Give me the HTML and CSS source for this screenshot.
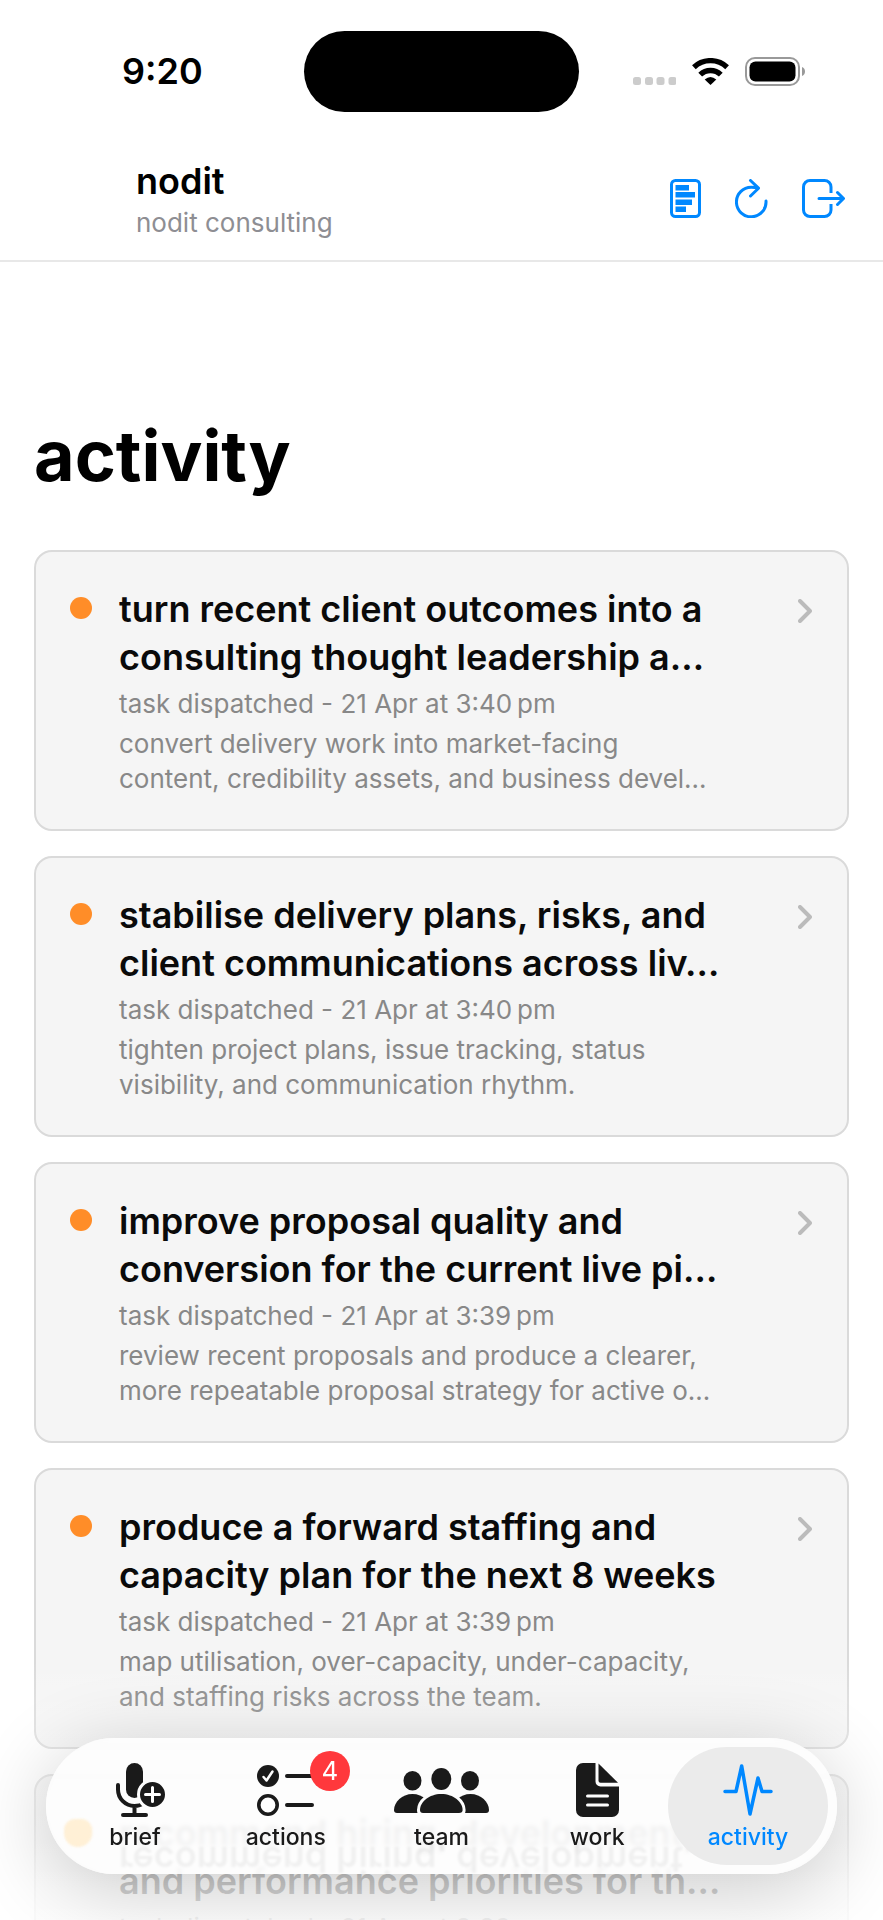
FILE: index.html
```html
<!DOCTYPE html>
<html lang="en">
<head>
  <meta charset="UTF-8">
  <meta name="viewport" content="width=device-width, initial-scale=1">
  <title>nodit - activity</title>
  <link rel="stylesheet" href="styles.css">
</head>
<body>
  <div class="app">

    <div class="status">
      <span class="time">9:20</span>
      <span class="island"></span>
      <div class="status-icons">
        <svg width="43" height="27" viewBox="0 0 43 27" fill="#ccc">
          <rect x="0" y="19" width="8" height="8" rx="2.5"/><rect x="12" y="19" width="8" height="8" rx="2.5"/>
          <rect x="23.5" y="19" width="8" height="8" rx="2.5"/><rect x="35.5" y="19" width="8" height="8" rx="2.5"/>
        </svg>
        <svg width="37" height="27" viewBox="0 0 37 27" fill="none" stroke="#000" stroke-width="5.4">
          <path d="M1.9 9.2A24.3 24.3 0 0 1 35.1 9.2"/>
          <path d="M8.2 16.6A14.8 14.8 0 0 1 28.8 16.6"/>
          <path d="M12.7 21.4Q18.5 16.4 24.3 21.4L18.5 27z" fill="#000" stroke="none"/>
        </svg>
        <svg width="61" height="29" viewBox="0 0 61 29">
          <rect x="1" y="1" width="53" height="27" rx="9" fill="none" stroke="#999" stroke-width="2"/>
          <rect x="4.5" y="4.5" width="46" height="20" rx="6" fill="#000"/>
          <path d="M57 10c4 1.5 4 7.5 0 9z" fill="#999"/>
        </svg>
      </div>
    </div>

    <header class="header">
      <div>
        <div class="brand">nodit</div>
        <div class="company">nodit consulting</div>
      </div>
      <div class="header-actions">
        <button type="button" aria-label="Report">
          <svg width="31" height="39" viewBox="0 0 31 39" fill="none" stroke="currentColor" stroke-width="3">
            <rect x="1.5" y="1.5" width="28" height="36" rx="4"/>
            <path stroke="none" fill="currentColor" d="M5.5 6H19v5.500H5.500zM5.500 13H25v5.500H5.500zM5.500 20.500H22v5.500H5.500zM5.500 27.500H16v5.500H5.500z"/>
          </svg>
        </button>
        <button type="button" aria-label="Refresh">
          <svg width="33" height="39" viewBox="0 0 33 39" fill="none" stroke="currentColor" stroke-width="3" stroke-linecap="round" stroke-linejoin="round">
            <path d="M31 22A14.8 14.8 0 1 1 16.3 8.2Q20 8.2 23.500 9.200M15.500 1.500L23.500 9.200L15.500 17"/>
          </svg>
        </button>
        <button type="button" aria-label="Sign out">
          <svg width="43" height="39" viewBox="0 0 43 39" fill="none" stroke="currentColor" stroke-width="3" stroke-linejoin="round">
            <path d="M29 14V8A6.5 6.5 0 0 0 22.5 1.5H8A6.5 6.5 0 0 0 1.5 8V31A6.5 6.5 0 0 0 8 37.5H22.5A6.5 6.5 0 0 0 29 31V25"/>
            <path stroke-linecap="round" d="M17 19.5H41M35.500 13.500L41.500 19.500L35.500 25.500"/>
          </svg>
        </button>
      </div>
    </header>

    <main class="content">
      <h1>activity</h1>
      <div class="feed">

        <a class="card" href="#">
          <span class="dot"></span>
          <div class="card-body">
            <h2>turn recent client outcomes into a<br>consulting thought leadership a…</h2>
            <p class="meta">task dispatched - 21 Apr at 3:40&#8239;pm</p>
            <p class="desc">convert delivery work into market-facing<br>content, credibility assets, and business devel…</p>
          </div>
          <svg class="chevron" width="14" height="24" viewBox="0 0 14 24"><path d="M2 2L12 12L2 22"/></svg>
        </a>

        <a class="card" href="#">
          <span class="dot"></span>
          <div class="card-body">
            <h2>stabilise delivery plans, risks, and<br>client communications across liv…</h2>
            <p class="meta">task dispatched - 21 Apr at 3:40&#8239;pm</p>
            <p class="desc">tighten project plans, issue tracking, status<br>visibility, and communication rhythm.</p>
          </div>
          <svg class="chevron" width="14" height="24" viewBox="0 0 14 24"><path d="M2 2L12 12L2 22"/></svg>
        </a>

        <a class="card" href="#">
          <span class="dot"></span>
          <div class="card-body">
            <h2>improve proposal quality and<br>conversion for the current live pi…</h2>
            <p class="meta">task dispatched - 21 Apr at 3:39&#8239;pm</p>
            <p class="desc">review recent proposals and produce a clearer,<br>more repeatable proposal strategy for active o…</p>
          </div>
          <svg class="chevron" width="14" height="24" viewBox="0 0 14 24"><path d="M2 2L12 12L2 22"/></svg>
        </a>

        <a class="card" href="#">
          <span class="dot"></span>
          <div class="card-body">
            <h2>produce a forward staffing and<br>capacity plan for the next 8 weeks</h2>
            <p class="meta">task dispatched - 21 Apr at 3:39&#8239;pm</p>
            <p class="desc">map utilisation, over-capacity, under-capacity,<br>and staffing risks across the team.</p>
          </div>
          <svg class="chevron" width="14" height="24" viewBox="0 0 14 24"><path d="M2 2L12 12L2 22"/></svg>
        </a>

        <a class="card" href="#">
          <span class="dot"></span>
          <div class="card-body">
            <h2>recommend hiring, development,<br>and performance priorities for th…</h2>
            <p class="meta">task dispatched - 21 Apr at 3:39&#8239;pm</p>
          </div>
        </a>

      </div>
    </main>

    <div class="fade"></div>

    <nav class="tabbar">
      <div class="glass" aria-hidden="true">
        <span class="glow"></span>
        <span class="reflection">recommend hiring, development,</span>
      </div>
      <a class="tab" href="#">
        <svg width="61" height="54" viewBox="-12 0 61 54" fill="none" stroke="#1a1a1a" stroke-width="4" stroke-linecap="round">
          <rect x="10" y="0" width="17" height="35" rx="8.5" fill="#1a1a1a" stroke="none"/>
          <path d="M2 22V26.5A16.5 16.5 0 0 0 18.5 43Q24 43 28 40M18.5 43V52M7 52H30"/>
          <circle cx="36.5" cy="31.5" r="14" fill="#1a1a1a" stroke="#fdfdfd" stroke-width="3"/>
          <path d="M36.5 24.5V38.5M29.5 31.5H43.5" stroke="#fff" stroke-width="3"/>
        </svg>
        <span>brief</span>
      </a>
      <a class="tab" href="#">
        <svg width="57" height="51" viewBox="0 0 57 51" fill="none" stroke="#1a1a1a" stroke-width="4" stroke-linecap="round">
          <circle cx="11" cy="11" r="11" fill="#1a1a1a" stroke="none"/>
          <path d="M6.5 12L9.5 15.5L15.5 6.5" stroke="#fff" stroke-width="2.5" stroke-linejoin="round"/>
          <circle cx="11" cy="40" r="9.2" stroke-width="3.6"/>
          <path d="M30 11H55M30 40H55"/>
        </svg>
        <span>actions</span>
        <b class="badge">4</b>
      </a>
      <a class="tab wide" href="#">
        <svg width="95" height="45" viewBox="0 0 95 45" fill="#1a1a1a">
          <ellipse cx="18.5" cy="12.7" rx="9" ry="9.8"/>
          <ellipse cx="76" cy="12.7" rx="9" ry="9.8"/>
          <ellipse cx="47.3" cy="11" rx="10" ry="11"/>
          <path d="M0 42C0 34 8 26 18.5 26S37 34 37 42Q37 45 34 45H3Q0 45 0 42z"/>
          <path d="M58 42C58 34 66 26 76.5 26S95 34 95 42Q95 45 92 45H61Q58 45 58 42z"/>
          <path d="M26 42C26 34 35 26 47.3 26S68.6 34 68.6 42Q68.6 45 65 45H29Q26 45 26 42z" stroke="#fdfdfd" stroke-width="6" paint-order="stroke"/>
        </svg>
        <span>team</span>
      </a>
      <a class="tab" href="#">
        <svg width="43" height="54" viewBox="0 0 43 54" fill="#1a1a1a">
          <path d="M7 0H19.5V18.5A5 5 0 0 0 24.5 23.5H43V47A7 7 0 0 1 36 54H7A7 7 0 0 1 0 47V7A7 7 0 0 1 7 0z"/>
          <path d="M22.5 .5L42 19.8H24.5A2 2 0 0 1 22.5 17.8z"/>
          <path d="M11.5 33H31.5M11.5 42H31.5" stroke="#fff" stroke-width="3" stroke-linecap="round"/>
        </svg>
        <span>work</span>
      </a>
      <a class="tab active" href="#" aria-current="page">
        <svg width="50" height="52" viewBox="0 0 50 52" fill="none" stroke="currentColor" stroke-width="3.5" stroke-linecap="round" stroke-linejoin="round">
          <path d="M2 27.5H13L18.7 2L27 50L35 14L39 27.5H48"/>
        </svg>
        <span>activity</span>
      </a>
    </nav>

  </div>
</body>
</html>
```
FILE: styles.css
```css
* { box-sizing: border-box; }
body { margin: 0; background: #fff; color: #000; font-family: Inter, "Liberation Sans", sans-serif; }
h1, h2, p { margin: 0; }
a { color: inherit; text-decoration: none; }
svg { display: block; flex: none; }

.app { position: relative; height: 100vh; overflow: hidden; display: flex; flex-direction: column; }

/* status bar */
.status { display: grid; grid-template-columns: 1fr 275px 1fr; align-items: center; height: 142px; flex: none; }
.time { padding-left: 122px; font-size: 36px; font-weight: 600; }
.island { height: 81px; border-radius: 41px; background: #000; }
.status-icons { display: flex; align-items: center; justify-content: flex-end; gap: 16px; padding-right: 77px; }

/* header */
.header { display: flex; justify-content: space-between; align-items: center; flex: none; padding: 15px 38px 20px 136px; border-bottom: 2px solid #e8e8e8; }
.brand { font-size: 36px; font-weight: 600; line-height: 48px; }
.company { font-size: 26px; line-height: 35px; color: #8e8e93; }
.header-actions { display: flex; align-items: center; gap: 34px; }
.header-actions button { padding: 0; border: none; background: none; color: #0088ff; cursor: pointer; }

/* feed */
.content { flex: 1; min-height: 0; padding: 150px 34px 0; }
h1 { font-size: 70px; font-weight: 700; line-height: 88px; }
.feed { display: flex; flex-direction: column; gap: 25px; margin-top: 50px; }
.card { display: flex; align-items: flex-start; gap: 27px; padding: 33px 35px 33px 34px; border: 2px solid #dadada; border-radius: 18px; background: #f5f5f5; }
.card-body { flex: 1; min-width: 0; white-space: nowrap; }
.card h2 { font-size: 36px; font-weight: 600; line-height: 48px; color: #0a0a0a; }
.meta, .desc { margin-top: 5px; font-size: 26px; line-height: 35px; color: #888; }
.dot { width: 22px; height: 22px; margin-top: 12px; border-radius: 50%; background: #ff8d28; }
.chevron { margin-top: 14px; fill: none; stroke: #bbb; stroke-width: 4; stroke-linecap: round; stroke-linejoin: round; }

/* content fades out towards the bottom edge */
.fade { position: absolute; left: 0; right: 0; bottom: 0; height: 260px; background: linear-gradient(rgba(255,255,255,0), rgba(255,255,255,.78) 85%, rgba(255,255,255,.88)); }

/* tab bar */
.tabbar { position: absolute; left: 46px; right: 46px; bottom: 46px; display: flex; padding: 9px; border-radius: 68px; box-shadow: 0 14px 80px rgba(0,0,0,.2); }
.glass { position: absolute; inset: 0; overflow: hidden; border-radius: 68px; background: rgba(253,253,253,.88); backdrop-filter: blur(2px); }
.glow { position: absolute; left: 18px; bottom: 27px; width: 28px; height: 28px; border-radius: 40% 40% 50% 50%; background: #fff0d6; filter: blur(1px); }
.reflection { position: absolute; left: 73px; bottom: -4px; height: 36px; overflow: hidden; font-size: 36px; font-weight: 600; line-height: 36px; white-space: nowrap; color: rgba(0,0,0,.05); filter: blur(1px); transform: scaleY(-1); }
.tab { position: relative; flex: 1; height: 118px; display: flex; flex-direction: column; align-items: center; padding: 10px 0 14px; border-radius: 59px; color: #1a1a1a; }
.tab + .tab { margin-left: -9px; }
.tab.wide { flex-grow: 1.06; }
.tab svg { margin: auto; }
.tab span { font-size: 23px; font-weight: 500; line-height: 28px; }
.tab.active { background: #ebebeb; color: #0088ff; }
.badge { position: absolute; top: 4px; left: 50%; margin-left: 24px; width: 40px; height: 40px; border-radius: 50%; background: #ff383c; color: #fff; font-size: 26px; font-weight: 400; line-height: 40px; text-align: center; }
```
